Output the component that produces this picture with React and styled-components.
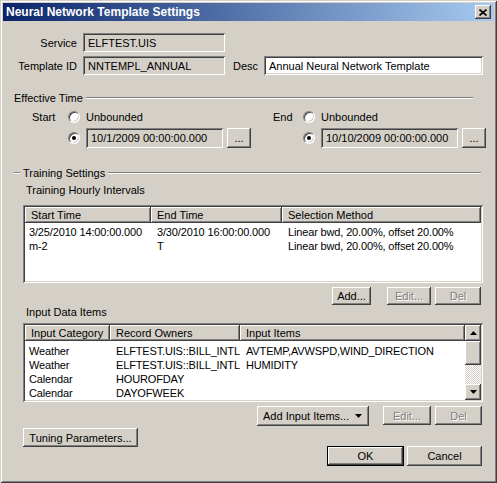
import React from 'react'
import styled, { createGlobalStyle, css } from 'styled-components'

const FACE = '#d4d0c8'

const raised = css`
  background: ${FACE};
  box-shadow: inset -1px -1px #404040, inset 1px 1px #fff, inset -2px -2px #808080, inset 2px 2px ${FACE};
`
const sunken = css`
  box-shadow: inset 1px 1px #808080, inset -1px -1px #fff, inset 2px 2px #404040, inset -2px -2px ${FACE};
`

const GlobalStyle = createGlobalStyle`
  body {
    margin: 0;
    background: #fff;
    font-family: "Liberation Sans", Arial, sans-serif;
    font-size: 11px;
    color: #000;
  }
`

const trainingRows = [
  ['3/25/2010 14:00:00.000', '3/30/2010 16:00:00.000', 'Linear bwd, 20.00%, offset 20.00%'],
  ['m-2', 'T', 'Linear bwd, 20.00%, offset 20.00%']
]

const inputRows = [
  ['Weather', 'ELFTEST.UIS::BILL_INTL', 'AVTEMP,AVWSPD,WIND_DIRECTION'],
  ['Weather', 'ELFTEST.UIS::BILL_INTL', 'HUMIDITY'],
  ['Calendar', 'HOUROFDAY', ''],
  ['Calendar', 'DAYOFWEEK', '']
]

const Arrow = ({ up }) => (
  <svg width="7" height="4" viewBox="0 0 7 4">
    <path d={up ? 'M3.5 0 L7 4 L0 4 Z' : 'M0 0 L7 0 L3.5 4 Z'} fill="#000" />
  </svg>
)

const TimeHalf = ({ label, labelWidth, value }) => (
  <Half $lw={labelWidth}>
    <TimeLabel>{label}</TimeLabel>
    <RadioCell><Radio /></RadioCell>
    <span>Unbounded</span>
    <span />
    <RadioCell><Radio checked /></RadioCell>
    <FieldLine>
      <Field $w={137} $h={20}>{value}</Field>
      <Button $w={24} $h={20}>...</Button>
    </FieldLine>
  </Half>
)

const App = () => (
  <>
    <GlobalStyle />
    <Window>
      <TitleBar>
        <span>Neural Network Template Settings</span>
        <CloseButton>
          <svg width="8" height="7" viewBox="0 0 8 7">
            <path d="M0.5 0.5 L7.5 6.5 M7.5 0.5 L0.5 6.5" stroke="#000" strokeWidth="1.6" />
          </svg>
        </CloseButton>
      </TitleBar>
      <Body>
        <TopGrid>
          <Label>Service</Label>
          <Field>ELFTEST.UIS</Field>
          <span />
          <span />
          <Label>Template ID</Label>
          <Field>NNTEMPL_ANNUAL</Field>
          <Label>Desc</Label>
          <Field $white>Annual Neural Network Template</Field>
        </TopGrid>

        <GroupHeader $mt={16} $mr={10}>
          <span>Effective Time</span>
          <Etch />
        </GroupHeader>
        <TimeRow>
          <TimeHalf label="Start" labelWidth={36} value="10/1/2009 00:00:00.000" />
          <TimeHalf label="End" labelWidth={30} value="10/10/2009 00:00:00.000" />
        </TimeRow>

        <GroupHeader $mt={18} $mr={2}>
          <Etch $w={6} />
          <span>Training Settings</span>
          <Etch />
        </GroupHeader>

        <SectionLabel $mt={4}>Training Hourly Intervals</SectionLabel>
        <Table $mt={8} $h={78}>
          <TableMain>
            <HeaderRow $cols="126px 131px 1fr">
              <HeaderCell>Start Time</HeaderCell>
              <HeaderCell>End Time</HeaderCell>
              <HeaderCell>Selection Method</HeaderCell>
            </HeaderRow>
            <Rows $pt={2}>
              {trainingRows.map((r, i) => (
                <Row key={i} $cols="126px 131px 1fr">
                  {r.map((c, j) => <Cell key={j}>{c}</Cell>)}
                </Row>
              ))}
            </Rows>
          </TableMain>
        </Table>
        <ButtonRow $mt={4} $mr={2}>
          <Button $w={39}>Add...</Button>
          <Button $w={44} $ml={16} disabled>Edit...</Button>
          <Button $w={46} $ml={4} disabled>Del</Button>
        </ButtonRow>

        <SectionLabel>Input Data Items</SectionLabel>
        <Table $mt={4} $h={79}>
          <TableMain>
            <HeaderRow $cols="85px 130px 1fr">
              <HeaderCell>Input Category</HeaderCell>
              <HeaderCell>Record Owners</HeaderCell>
              <HeaderCell>Input Items</HeaderCell>
            </HeaderRow>
            <Rows $pt={3}>
              {inputRows.map((r, i) => (
                <Row key={i} $cols="85px 130px 1fr">
                  {r.map((c, j) => <Cell key={j}>{c}</Cell>)}
                </Row>
              ))}
            </Rows>
          </TableMain>
          <ScrollBar>
            <ScrollButton><Arrow up /></ScrollButton>
            <Thumb />
            <Track />
            <ScrollButton><Arrow /></ScrollButton>
          </ScrollBar>
        </Table>
        <ButtonRow $mt={4} $mr={1}>
          <DropButton>
            <span>Add Input Items...</span>
            <Arrow />
          </DropButton>
          <Button $w={48} $h={19} $ml={14} disabled>Edit...</Button>
          <Button $w={47} $h={19} $ml={4} disabled>Del</Button>
        </ButtonRow>

        <Footer>
          <Button $w={115} $h={19}>Tuning Parameters...</Button>
          <FooterRight>
            <Button $w={77} $h={20} $default>OK</Button>
            <Button $w={75} $h={20} $ml={3}>Cancel</Button>
          </FooterRight>
        </Footer>
      </Body>
    </Window>
  </>
)

export default App

const Window = styled.div`
  width: 497px;
  height: 483px;
  box-sizing: border-box;
  padding: 3px;
  background: ${FACE};
  box-shadow: inset 1px 1px ${FACE}, inset -1px -1px #404040, inset 2px 2px #fff, inset -2px -2px #808080;
  display: flex;
  flex-direction: column;
`
const TitleBar = styled.div`
  height: 18px;
  flex-shrink: 0;
  display: flex;
  align-items: center;
  justify-content: space-between;
  padding: 0 3px;
  background: linear-gradient(to right, #0a246a, #a6caf0);
  color: #fff;
  font-weight: bold;
  font-size: 12px;
`
const CloseButton = styled.div`
  ${raised};
  width: 16px;
  height: 14px;
  display: flex;
  align-items: center;
  justify-content: center;
`
const Body = styled.div`
  display: flex;
  flex-direction: column;
  padding: 12px 11px 0 0;
`
const TopGrid = styled.div`
  display: grid;
  grid-template-columns: 74px 142px 27px 219px;
  grid-auto-rows: 19px;
  column-gap: 6px;
  row-gap: 4px;
`
const Label = styled.div`
  align-self: center;
  text-align: right;
  white-space: nowrap;
`
const Field = styled.div`
  ${sunken};
  box-sizing: border-box;
  width: ${({ $w }) => ($w ? `${$w}px` : 'auto')};
  height: ${({ $h }) => $h || 19}px;
  padding: 0 5px;
  display: flex;
  align-items: center;
  white-space: nowrap;
  overflow: hidden;
  background: ${({ $white }) => ($white ? '#fff' : FACE)};
`
const GroupHeader = styled.div`
  display: flex;
  align-items: center;
  gap: 3px;
  height: 13px;
  margin: ${({ $mt }) => $mt}px ${({ $mr }) => $mr}px 0 11px;
  white-space: nowrap;
`
const Etch = styled.div`
  flex: ${({ $w }) => ($w ? `0 0 ${$w}px` : 1)};
  border-top: 1px solid #808080;
  border-bottom: 1px solid #fff;
  margin-top: 1px;
`
const TimeRow = styled.div`
  display: flex;
  gap: 22px;
  margin: 6px 0 0 29px;
`
const Half = styled.div`
  display: grid;
  grid-template-columns: ${({ $lw }) => $lw}px 18px auto;
  grid-template-rows: 14px 20px;
  row-gap: 4px;
  align-items: center;
`
const TimeLabel = styled.span`
  white-space: nowrap;
`
const RadioCell = styled.span`
  display: flex;
  align-items: center;
`
const Radio = styled.span`
  position: relative;
  width: 12px;
  height: 12px;
  box-sizing: border-box;
  border-radius: 50%;
  background: #fff;
  border: 1px solid;
  border-color: #808080 #fff #fff #808080;
  box-shadow: inset 1px 1px #404040, inset -1px -1px ${FACE};
  &::after {
    content: '';
    display: ${({ checked }) => (checked ? 'block' : 'none')};
    position: absolute;
    left: 3px;
    top: 3px;
    width: 4px;
    height: 4px;
    border-radius: 50%;
    background: #000;
  }
`
const FieldLine = styled.div`
  display: flex;
  gap: 4px;
`
const SectionLabel = styled.div`
  line-height: 14px;
  margin: ${({ $mt }) => $mt || 0}px 0 0 23px;
`
const Table = styled.div`
  ${sunken};
  background: #fff;
  box-sizing: border-box;
  height: ${({ $h }) => $h}px;
  margin: ${({ $mt }) => $mt}px 0 0 20px;
  padding: 2px;
  display: flex;
  overflow: hidden;
`
const TableMain = styled.div`
  flex: 1;
  min-width: 0;
  display: flex;
  flex-direction: column;
`
const HeaderRow = styled.div`
  display: grid;
  grid-template-columns: ${({ $cols }) => $cols};
  height: 16px;
  flex-shrink: 0;
`
const HeaderCell = styled.div`
  ${raised};
  padding: 0 6px;
  display: flex;
  align-items: center;
  white-space: nowrap;
  overflow: hidden;
`
const Rows = styled.div`
  padding-top: ${({ $pt }) => $pt}px;
`
const Row = styled.div`
  display: grid;
  grid-template-columns: ${({ $cols }) => $cols};
  height: 14px;
  line-height: 14px;
`
const Cell = styled.div`
  padding-left: 6px;
  white-space: nowrap;
  letter-spacing: -0.15px;
  &:first-child {
    padding-left: 4px;
  }
`
const ScrollBar = styled.div`
  width: 16px;
  display: flex;
  flex-direction: column;
`
const ScrollButton = styled.div`
  ${raised};
  height: 16px;
  flex-shrink: 0;
  display: flex;
  align-items: center;
  justify-content: center;
`
const Thumb = styled.div`
  ${raised};
  height: 24px;
  flex-shrink: 0;
`
const Track = styled.div`
  flex: 1;
  background: repeating-conic-gradient(#fff 0 25%, ${FACE} 0 50%) 0 0 / 2px 2px;
`
const ButtonRow = styled.div`
  display: flex;
  justify-content: flex-end;
  align-items: flex-start;
  margin: ${({ $mt }) => $mt}px ${({ $mr }) => $mr}px 0 0;
`
const Button = styled.button`
  ${raised};
  border: none;
  padding: 0;
  margin: 0 0 0 ${({ $ml }) => $ml || 0}px;
  font: inherit;
  width: ${({ $w }) => $w}px;
  height: ${({ $h }) => $h || 18}px;
  flex-shrink: 0;
  white-space: nowrap;
  color: ${({ disabled }) => (disabled ? '#808080' : '#000')};
  text-shadow: ${({ disabled }) => (disabled ? '1px 1px #fff' : 'none')};
  ${({ $default }) =>
    $default &&
    css`
      box-shadow: inset 0 0 0 1px #000, inset -2px -2px #404040, inset 2px 2px #fff, inset -3px -3px #808080;
    `}
`
const DropButton = styled.button`
  ${raised};
  border: none;
  font: inherit;
  width: 112px;
  height: 20px;
  padding: 0 7px 0 6px;
  display: flex;
  align-items: center;
  justify-content: space-between;
`
const Footer = styled.div`
  display: flex;
  justify-content: space-between;
  align-items: flex-start;
  margin: 2px 1px 0 20px;
`
const FooterRight = styled.div`
  display: flex;
  margin-top: 18px;
`
